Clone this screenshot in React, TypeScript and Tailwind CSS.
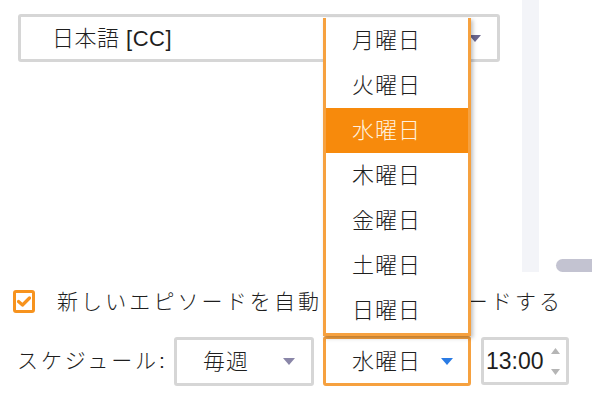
import React from "react";

const font = { fontFamily: '"Liberation Sans", "Noto Sans CJK JP", sans-serif' };

function Arrow({ color, className }: { color: string; className?: string }) {
  return (
    <svg width="12" height="7" viewBox="0 0 12 7" className={className}>
      <polygon points="0,0 12,0 6,7" fill={color} />
    </svg>
  );
}

const days = ["月曜日", "火曜日", "水曜日", "木曜日", "金曜日", "土曜日", "日曜日"];

export default function App() {
  return (
    <div
      className="relative w-[592px] h-[395px] overflow-hidden bg-white text-[#1e1e1e] font-light"
      style={font}
    >
      {/* top area */}
      <div className="flex h-[272px]">
        <div className="w-[522px] pl-[18px] pt-[14px]">
          <div className="flex items-center justify-between w-[482px] h-[48px] border-[3px] border-[#d6d6d6] rounded-[3px] pl-[31px] pr-[16px]">
            <span className="text-[22px] tracking-[0.5px]">日本語 [CC]</span>
            <Arrow color="#6b6790" />
          </div>
        </div>
        <div className="w-[17px] h-full bg-[#f3f4f8]" />
        <div className="flex-1 flex items-end pl-[17px]">
          <div className="h-[13px] w-full rounded-l-full bg-[#c3c3d1]" />
        </div>
      </div>

      {/* checkbox row */}
      <div className="flex items-center mt-[18px] pl-[13px] h-[23px]">
        <div className="flex items-center justify-center w-[22px] h-[23px] border-[3px] border-[#f7931e] rounded-[3px]">
          <svg width="14" height="12" viewBox="0 0 14 12">
            <polyline
              points="1.5,5.5 5.5,9 12.5,2"
              fill="none"
              stroke="#f7931e"
              strokeWidth="3.2"
              strokeLinecap="round"
              strokeLinejoin="round"
            />
          </svg>
        </div>
        <span className="ml-[22px] text-[21px] tracking-[3.1px] whitespace-nowrap">
          新しいエピソードを自動的にダウンロードする
        </span>
      </div>

      {/* schedule row */}
      <div className="flex items-center mt-[23px] pl-[17px]">
        <span className="w-[157px] text-[21px] tracking-[2.9px] whitespace-nowrap">スケジュール:</span>
        <div className="flex items-center justify-between w-[140px] h-[49px] border-[3px] border-[#d6d6d6] rounded-[3px] pl-[26px] pr-[16px]">
          <span className="text-[22px] tracking-[1px]">毎週</span>
          <Arrow color="#8a86a8" />
        </div>
        <div className="ml-[9px] flex items-center justify-between w-[148px] h-[50px] border-[3px] border-[#f6a13f] rounded-[3px] pl-[26px] pr-[15px]">
          <span className="text-[22px] tracking-[1px]">水曜日</span>
          <Arrow color="#2a7be4" />
        </div>
        <div className="ml-[10px] flex items-center justify-between w-[88px] h-[48px] border-[3px] border-[#d6d6d6] rounded-[3px] pl-[2px] pr-[6px]">
          <span className="text-[23px] font-normal">13:00</span>
          <div className="flex flex-col gap-[15px]">
            <svg width="9" height="6" viewBox="0 0 9 6">
              <polygon points="0,6 9,6 4.5,0" fill="#b5b5b5" />
            </svg>
            <svg width="9" height="6" viewBox="0 0 9 6">
              <polygon points="0,0 9,0 4.5,6" fill="#b5b5b5" />
            </svg>
          </div>
        </div>
      </div>

      {/* open dropdown list */}
      <div className="absolute left-[323px] top-[18px] w-[148px] bg-white border-x-[3px] border-b-[3px] border-[#f6a13f] shadow-[2px_2px_4px_rgba(0,0,0,0.25)]">
        {days.map((d) => (
          <div
            key={d}
            className={
              d === "水曜日"
                ? "h-[45px] flex items-center pl-[26px] bg-[#f78a0c] text-[#fff1df] text-[22px] tracking-[1px]"
                : "h-[45px] flex items-center pl-[26px] text-[22px] tracking-[1px]"
            }
          >
            {d}
          </div>
        ))}
      </div>
    </div>
  );
}
